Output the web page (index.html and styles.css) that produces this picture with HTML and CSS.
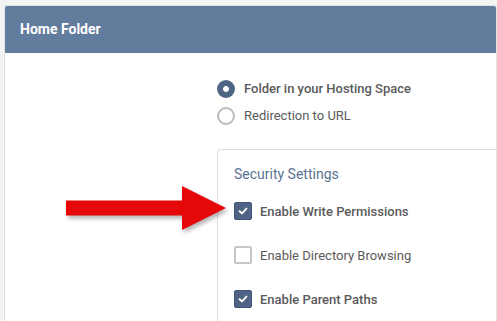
FILE: index.html
```html
<!doctype html>
<html lang="en">
<head>
  <meta charset="UTF-8" />
  <meta name="viewport" content="width=device-width, initial-scale=1.0" />
  <title>Home Folder</title>
  <link rel="stylesheet" href="styles.css">
</head>
<body>
  <div class="card">
    <div class="card-head">Home Folder</div>
    <div class="card-body">
      <div class="radios">
        <label class="radio-row checked"><span class="radio"></span>Folder in your Hosting Space</label>
        <label class="radio-row"><span class="radio"></span>Redirection to URL</label>
      </div>
      <div class="box">
        <div class="box-title">Security Settings</div>
        <label class="check-row checked">
          <span class="check"><svg viewBox="0 0 10 10" width="10" height="10"><path d="M1.6 5.2 L4 7.4 L8.4 2.6" fill="none" stroke="#fff" stroke-width="1.9" stroke-linecap="round" stroke-linejoin="round"/></svg></span>
          Enable Write Permissions
        </label>
        <label class="check-row">
          <span class="check"></span>
          Enable Directory Browsing
        </label>
        <label class="check-row checked">
          <span class="check"><svg viewBox="0 0 10 10" width="10" height="10"><path d="M1.6 5.2 L4 7.4 L8.4 2.6" fill="none" stroke="#fff" stroke-width="1.9" stroke-linecap="round" stroke-linejoin="round"/></svg></span>
          Enable Parent Paths
        </label>
      </div>
    </div>
  </div>

  <svg class="arrow" width="180" height="60" viewBox="60 180 180 60">
    <polygon points="66,200.5 182,200.5 182,186 226,208 182,230 182,215.5 66,215.5" fill="#e60808"/>
  </svg>
</body>
</html>
```
FILE: styles.css
```css
* { box-sizing: border-box; }
html, body { height: 100%; }
body {
  margin: 0;
  background: #f4f4f4;
  font-family: Roboto, "Liberation Sans", sans-serif;
  color: #5a5a5a;
  overflow: hidden;
}
.card {
  margin: 5px 0 0 4px;
  height: calc(100vh - 5px);
  overflow: hidden;
  background: #fff;
  border: 1px solid #e2e2e2;
  border-bottom: 0;
  border-radius: 3px 3px 0 0;
}
.card-head {
  height: 48px;
  margin: -1px -1px 0;
  padding: 0 16px;
  display: flex;
  align-items: center;
  background: #627c9e;
  border-radius: 3px 3px 0 0;
  color: #fff;
  font-size: 14px;
  font-weight: 700;
}
.card-body { padding: 22px 0 0 212px; }
.radios { display: flex; flex-direction: column; }
.radio-row {
  height: 27px;
  display: flex;
  align-items: center;
  gap: 9px;
  font-size: 13px;
}
.radio-row.checked { font-weight: 500; }
.radio {
  width: 18px; height: 18px;
  border-radius: 50%;
  border: 2px solid #b8bcc2;
  background: #fff;
  flex: none;
}
.radio-row.checked .radio {
  border: 0;
  background: radial-gradient(circle, #fff 0 2.6px, #4f6586 3.2px);
}
.box {
  margin-top: 20px;
  padding: 14px 0 0 16px;
  border: 1px solid #dcdcdc;
  border-right: 0;
  border-bottom: 0;
  border-radius: 4px 0 0 0;
}
.box-title {
  height: 20px;
  margin-bottom: 5px;
  line-height: 20px;
  font-size: 14px;
  color: #5a7394;
}
.check-row {
  height: 44px;
  display: flex;
  align-items: center;
  gap: 8px;
  font-size: 13px;
}
.check-row.checked { font-weight: 500; }
.check {
  width: 18px; height: 18px;
  flex: none;
  display: flex;
  align-items: center;
  justify-content: center;
  border: 2px solid #c3c7cc;
  border-radius: 2px;
  background: #fff;
}
.check-row.checked .check {
  border: 1px solid #41557a;
  background: #4f6384;
}
.arrow {
  position: absolute;
  left: 60px;
  top: 180px;
  overflow: visible;
  filter: drop-shadow(2px 3px 2px rgba(0,0,0,.3));
}
```
